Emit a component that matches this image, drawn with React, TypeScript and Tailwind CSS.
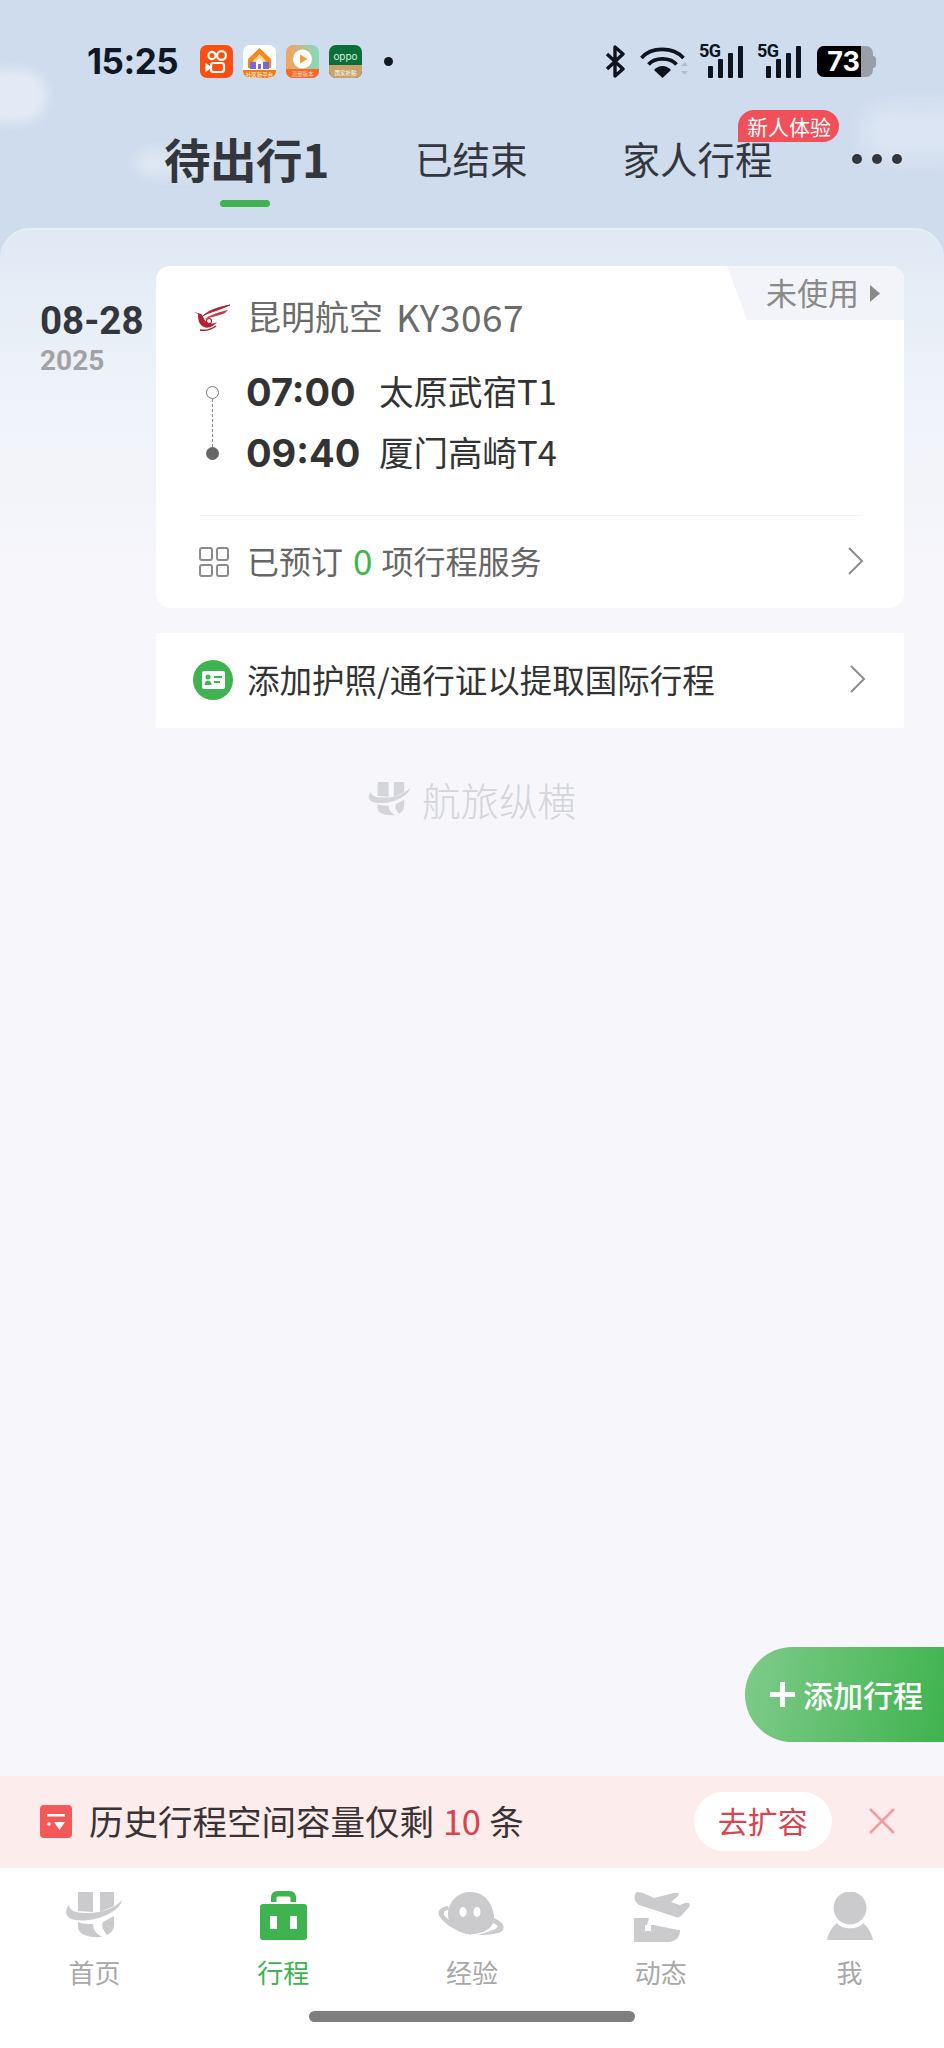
import React from 'react';

const GREEN = '#3fb34f';

const BrandMark: React.FC<{ className?: string }> = ({ className }) => (
    <svg viewBox="0 0 57 46" className={className} fill="currentColor">
        <path d="M13 0h15v20l-15-1z" />
        <path d="M35 0h14v14l-14 6z" />
        <path d="M57 8C55 20 30 31 10 28C2 27-2 20 4 13C4 18 10 21 20 21C35 22 50 16 57 8z" />
        <path d="M13 30C18 32 24 32 28 32C28 38 32 42 37 45C22 46 13 42 13 35z" />
        <path d="M38 30L49 24V33C49 38 46 41 42 43C38 38 36 34 38 30z" />
    </svg>
);

const Chevron: React.FC = () => (
    <svg viewBox="0 0 18 30" className="w-[18px] h-[30px]" fill="none" stroke="#8c8c8c" strokeWidth="2">
        <path d="M2 2l13 13L2 28" />
    </svg>
);

const Kuaishou: React.FC = () => (
    <svg viewBox="0 0 33 33" className="w-[33px] h-[33px]">
        <rect width="33" height="33" rx="7" fill="#fa4f0f" />
        <g fill="none" stroke="#fff" strokeWidth="2.2">
            <circle cx="12" cy="10.5" r="3.6" />
            <circle cx="21.5" cy="10.5" r="4.4" />
            <rect x="11" y="18" width="13" height="9" rx="2.5" />
            <path d="M10 22.5l-3.5-2.5v5z" />
        </g>
    </svg>
);

const HouseApp: React.FC = () => (
    <svg viewBox="0 0 33 33" className="w-[33px] h-[33px]">
        <rect width="33" height="33" rx="7" fill="#fff" />
        <path d="M16.5 3L28 14v9H5V14z" fill="#f28a1e" />
        <path d="M16.5 9l6 6v8h-12v-8z" fill="#fbd38a" />
        <rect x="7" y="17" width="19" height="7" fill="#7a68d8" />
        <path d="M16.5 13l3.5 3.5V24h-7v-7.500z" fill="#fff" />
        <rect x="15" y="19" width="3" height="5" fill="#7a68d8" />
        <path d="M0 25h33v1a7 7 0 0 1-7 7H7a7 7 0 0 1-7-7z" fill="#f07d12" />
        <text x="16.5" y="31.500" textAnchor="middle" fontSize="5.500" fill="#fff" fontFamily="'Noto Sans CJK SC', sans-serif">社区新平台</text>
    </svg>
);

const PlayApp: React.FC = () => (
    <svg viewBox="0 0 33 33" className="w-[33px] h-[33px]">
        <defs>
            <linearGradient id="playBg" x1="0" y1="0" x2="1" y2="0">
                <stop offset="0" stopColor="#f7a25a" />
                <stop offset="1" stopColor="#7fdcc0" />
            </linearGradient>
        </defs>
        <rect width="33" height="33" rx="7" fill="url(#playBg)" />
        <path d="M0 24h33v2a7 7 0 0 1-7 7H7a7 7 0 0 1-7-7z" fill="#f4692a" />
        <circle cx="16.5" cy="14" r="9.500" fill="#fff" />
        <path d="M14 9.500l7.500 4.500-7.500 4.500z" fill="#f59a3c" />
        <text x="16.5" y="31" textAnchor="middle" fontSize="5.500" fill="#ffd9c2" fontFamily="'Noto Sans CJK SC', sans-serif">流量版本</text>
    </svg>
);

const OppoApp: React.FC = () => (
    <svg viewBox="0 0 33 33" className="w-[33px] h-[33px]">
        <rect width="33" height="33" rx="7" fill="#0b6d37" />
        <path d="M0 20h33v6a7 7 0 0 1-7 7H7a7 7 0 0 1-7-7z" fill="#c7a26c" />
        <text x="16.5" y="15" textAnchor="middle" fontSize="10" fill="#d8f0df" fontFamily="'Inter', sans-serif">oppo</text>
        <text x="16.5" y="29.500" textAnchor="middle" fontSize="5.500" fill="#fff" fontFamily="'Noto Sans CJK SC', sans-serif">国家补贴</text>
    </svg>
);

const Signal: React.FC = () => (
    <div className="relative w-[44px] h-[33px]">
        <span className="absolute left-0 top-[-4px] text-[18px] leading-[20px] font-bold tracking-[-0.5px] text-[#0d1420] font-['Roboto',sans-serif]">5G</span>
        <div className="absolute left-[9px] bottom-0 flex items-end gap-[5px]">
            <div className="w-[5px] h-[12px] bg-[#0d1420] rounded-[1px]" />
            <div className="w-[5px] h-[19px] bg-[#0d1420] rounded-[1px]" />
            <div className="w-[5px] h-[25px] bg-[#0d1420] rounded-[1px]" />
            <div className="w-[5px] h-[32px] bg-[#0d1420] rounded-[1px]" />
        </div>
    </div>
);

const StatusBar: React.FC = () => (
    <div className="flex items-center h-[33px] mt-[45px] pl-[87px] pr-[68px]">
        <span className="w-[113px] text-[35px] leading-[33px] font-bold text-[#0f1723] font-['Inter',sans-serif] tracking-[-0.5px]">15:25</span>
        <div className="flex gap-[10px]">
            <Kuaishou />
            <HouseApp />
            <PlayApp />
            <OppoApp />
        </div>
        <div className="w-[9px] h-[9px] ml-[22px] rounded-full bg-[#0f1723]" />
        <div className="flex items-center ml-auto">
            <svg viewBox="0 0 20 33" className="w-[20px] h-[33px]" fill="none" stroke="#0d1420" strokeWidth="3.4" strokeLinejoin="round">
                <path d="M2 9l16 15-8 7V2l8 7L2 24" />
            </svg>
            <svg viewBox="0 0 48 33" className="w-[48px] h-[33px] ml-[15px]" fill="none">
                <g stroke="#0d1420" strokeWidth="3.600">
                    <path d="M1.500 13C11 1.500 33 1.500 43.500 13" />
                    <path d="M8.500 19.500C15 12 30 12 36.500 19.500" />
                </g>
                <path d="M14 25C19 19.500 26 19.500 31 25l-8.500 8z" fill="#0d1420" />
                <path d="M41 21l4-4 3 4zM41 26l3.500 4 3.500-4z" fill="#b4bccb" />
            </svg>
            <div className="ml-[11px]"><Signal /></div>
            <div className="ml-[14px]"><Signal /></div>
            <div className="ml-[16px] flex items-center">
                <div className="relative w-[56px] h-[31px] rounded-[7px] overflow-hidden bg-[#9a9ea9]">
                    <div className="w-[44px] h-full bg-black flex items-center justify-end pr-[1px]">
                        <span className="text-[27px] leading-[31px] font-bold text-white font-['Inter',sans-serif]">73</span>
                    </div>
                </div>
                <div className="w-[3px] h-[12px] rounded-r-full bg-[#9a9ea9]" />
            </div>
        </div>
    </div>
);

const TabBar: React.FC = () => (
    <div className="relative flex items-center h-[60px] mt-[50px] pl-[164px] text-[#33373d]">
        <div className="relative">
            <span className="text-[46.5px] leading-[60px] font-bold tracking-[-0.5px]">待出行1</span>
            <div className="absolute left-[56px] top-[72px] w-[50px] h-[7px] rounded-full" style={{ backgroundColor: GREEN }} />
        </div>
        <span className="ml-[86px] text-[37.5px] leading-[60px]">已结束</span>
        <div className="relative ml-[95px]">
            <span className="text-[37.5px] leading-[60px]">家人行程</span>
            <div className="absolute left-[116px] top-[-18px] w-[101px] h-[32px] rounded-t-[16px] rounded-br-[16px] bg-[#f0505a] text-white text-[21px] leading-[32px] text-center whitespace-nowrap">新人体验</div>
        </div>
        <div className="flex gap-[10px] ml-[80px] mt-[2px]">
            <div className="w-[10px] h-[10px] rounded-full bg-[#33373d]" />
            <div className="w-[10px] h-[10px] rounded-full bg-[#33373d]" />
            <div className="w-[10px] h-[10px] rounded-full bg-[#33373d]" />
        </div>
    </div>
);

const AirlineLogo: React.FC = () => (
    <svg viewBox="2 0 38 27" className="w-[38px] h-[27px] -ml-[1px]" fill="none">
        <path d="M38 1C28 3 16 6 10 13C13 9 25 7 38 1z" fill="#b3202e" stroke="#b3202e" />
        <path d="M36 6C27 8 17 11 12 16C17 13 27 12 33 9z" fill="#c43a46" />
        <path d="M2 8L6 10C6 16 7 21 12 23C16 25 22 22 25 18C21 20 17 20 15 18C11 16 12 12 9 10z" fill="#b3202e" />
        <circle cx="17" cy="17" r="2.500" stroke="#b3202e" strokeWidth="1.200" />
        <path d="M8 26C14 27 20 25 24 22" stroke="#b3202e" strokeWidth="1.500" />
    </svg>
);

const FlightCard: React.FC = () => (
    <div className="relative bg-white rounded-[14px] h-[342px] px-[39px]">
        <div className="absolute right-0 top-0 w-[177px] h-[54px] rounded-tr-[14px] bg-[#f3f4f9] [clip-path:polygon(0_0,100%_0,100%_100%,20px_100%)] flex items-center justify-end pr-[24px]">
            <span className="text-[31px] leading-[52px] pb-[2px] text-[#8a8a8a]">未使用</span>
            <svg viewBox="0 0 10 17" className="w-[10px] h-[17px] ml-[11px]" fill="#8a8a8a">
                <path d="M0 0l10 8.500L0 17z" />
            </svg>
        </div>
        <div className="flex items-center h-[50px] pt-[26px] box-content leading-[50px] text-[#6b6b6b]">
            <AirlineLogo />
            <span className="ml-[15px] pb-[2px] text-[34px] whitespace-nowrap">昆明航空</span>
            <span className="ml-[13px] pb-[2px] text-[37px] tracking-[0.5px]">KY3067</span>
        </div>
        <div className="flex mt-[20px]">
            <div className="relative w-[52px] h-[122px]">
                <div className="absolute left-[11px] top-[24px] w-[13px] h-[13px] rounded-full border border-[#777] bg-white" />
                <div className="absolute left-[17px] top-[37px] h-[48px] border-l border-dashed border-[#888]" />
                <div className="absolute left-[11px] top-[85px] w-[13px] h-[13px] rounded-full bg-[#666]" />
            </div>
            <div className="flex flex-col -ml-[1px] text-[#333]">
                <div className="flex items-center h-[61px]">
                    <span className="w-[133px] text-[38px] leading-[61px] font-bold font-['Inter',sans-serif]">07:00</span>
                    <span className="pb-[4px] text-[34.5px] leading-[57px] whitespace-nowrap">太原武宿T1</span>
                </div>
                <div className="flex items-center h-[61px]">
                    <span className="w-[133px] text-[38px] leading-[61px] font-bold font-['Inter',sans-serif]">09:40</span>
                    <span className="pb-[4px] text-[34.5px] leading-[57px] whitespace-nowrap">厦门高崎T4</span>
                </div>
            </div>
        </div>
        <div className="h-px bg-[#f2f2f2] mt-[31px] mr-[2px] ml-[4px]" />
        <div className="flex items-center h-[92px] ml-[4px] mr-[2px] text-[32px] leading-[84px] text-[#666]">
            <div className="grid grid-cols-2 gap-[3px] w-[30px] h-[30px]">
                <div className="border-2 border-[#8c8c8c] rounded-[3px]" />
                <div className="border-2 border-[#8c8c8c] rounded-[3px]" />
                <div className="border-2 border-[#8c8c8c] rounded-[3px]" />
                <div className="border-2 border-[#8c8c8c] rounded-[3px]" />
            </div>
            <span className="ml-[18px] pb-[5px]">已预订</span>
            <span className="ml-[10px] pb-[5px] text-[35px]" style={{ color: GREEN }}>0</span>
            <span className="ml-[9px] pb-[5px]">项行程服务</span>
            <div className="ml-auto -mr-[2px] -mt-[3px]"><Chevron /></div>
        </div>
    </div>
);

const PassportRow: React.FC = () => (
    <div className="flex items-center h-[95px] mt-[25px] bg-white pl-[37px] pr-[37px]">
        <svg viewBox="0 0 40 40" className="w-[40px] h-[40px] -mt-[2px]">
            <circle cx="20" cy="20" r="20" fill={GREEN} />
            <rect x="9" y="11" width="23" height="18" rx="2" fill="#fff" />
            <circle cx="15" cy="17" r="2.500" fill={GREEN} />
            <path d="M11.500 25c0-6 7-6 7 0z" fill={GREEN} />
            <rect x="21" y="16" width="8" height="2" fill={GREEN} />
            <rect x="21" y="21" width="6" height="2" fill={GREEN} />
        </svg>
        <span className="ml-[14px] pb-[5px] text-[32.5px] leading-[85px] text-[#333] whitespace-nowrap">添加护照/通行证以提取国际行程</span>
        <div className="ml-auto -mr-[0px] -mt-[3px]"><Chevron /></div>
    </div>
);

const NavIcon: React.FC<{ name: string }> = ({ name }) => {
    if (name === '首页') return <BrandMark className="w-[57px] h-[46px] mt-[3px] -ml-[2px] text-[#cbcbcd]" />;
    if (name === '行程')
        return (
            <svg viewBox="0 0 47 51" className="w-[47px] h-[51px]">
                <path d="M11 13V8a6 6 0 0 1 6-6h13a6 6 0 0 1 6 6v5h-5.500V9a1.500 1.500 0 0 0-1.500-1.500H18A1.500 1.500 0 0 0 16.500 9v4z" fill={GREEN} />
                <rect y="15" width="47" height="36" rx="3" fill={GREEN} />
                <rect x="10" y="27" width="7" height="13" fill="#fff" />
                <rect x="30" y="27" width="7" height="13" fill="#fff" />
            </svg>
        );
    if (name === '经验')
        return (
            <svg viewBox="0 0 66 44" className="w-[66px] h-[44px] mt-[3px] -ml-[2px]" fill="#cbcbcd">
                <path d="M32 0C46 0 54 10 56 24C57 34 48 41 36 42C22 43 10 36 10 22C10 10 20 0 32 0z" />
                <path d="M10 14C2 15-2 20 2 25C7 33 20 40 34 43L24 35C16 32 9 27 6 23C5 20 7 18 11 18z" />
                <path d="M56 26C64 30 67 33 65 38C63 42 50 43 40 43C48 40 58 38 60 35C60 33 58 32 55 31z" />
                <ellipse cx="25" cy="20" rx="3.500" ry="5" fill="#fff" />
                <ellipse cx="39" cy="20" rx="3.500" ry="5" fill="#fff" />
            </svg>
        );
    if (name === '动态')
        return (
            <svg viewBox="0 0 57 50" className="w-[57px] h-[50px] mt-[3px] ml-[4px]" fill="#cbcbcd">
                <path d="M3 0C8 0 14 3 20 6L40 1C44 0 46 2 44 4L37 10L46 13L51 11C55 10 57 12 55 15L48 23C46 25 44 26 42 25L5 13C0 10-1 3 3 0z" />
                <path d="M0 26H15L13 33H20L44 38H46C46 45 42 50 34 50H0z" />
                <rect x="11" y="33" width="6" height="6" fill="#fff" />
            </svg>
        );
    return (
        <svg viewBox="0 0 46 48" className="w-[46px] h-[48px] mt-[3px]" fill="#cbcbcd">
            <ellipse cx="23" cy="16" rx="16.500" ry="16.500" />
            <path d="M10 31C14 38 32 38 36 31C41 35 45 42 46 48H0C1 42 5 35 10 31z" />
        </svg>
    );
};

const NAV_ITEMS = ['首页', '行程', '经验', '动态', '我'];

const BottomNav: React.FC = () => (
    <div className="h-[182px] bg-white border-t-2 border-[#f1f1f1]">
        <div className="grid grid-cols-5 pt-[21px]">
            {NAV_ITEMS.map((name) => (
                <div key={name} className="flex flex-col items-center">
                    <div className="flex items-start justify-center h-[54px]">
                        <NavIcon name={name} />
                    </div>
                    <span
                        className="mt-[9px] text-[26px] leading-[40px]"
                        style={{ color: name === '行程' ? GREEN : '#a8a8a8' }}
                    >
                        {name}
                    </span>
                </div>
            ))}
        </div>
        <div className="w-[326px] h-[11px] mx-auto mt-[19px] rounded-full bg-[#7f7f7f]" />
    </div>
);

const App: React.FC = () => {
    return (
        <div className="relative w-[944px] h-[2048px] overflow-hidden flex flex-col bg-[#cfdcee] font-['Noto_Sans_CJK_SC',sans-serif]">
            {/* 구름 */}
            <div className="absolute left-[-25px] top-[70px] w-[72px] h-[52px] rounded-full bg-[#e2ebf5] blur-[6px]" />
            <div className="absolute left-[135px] top-[150px] w-[80px] h-[26px] rounded-full bg-[#dde7f2] blur-[6px]" />
            <div className="absolute left-[860px] top-[105px] w-[120px] h-[55px] rounded-full bg-[#dbe5f3] blur-[10px]" />

            <div className="relative h-[228px]">
                <StatusBar />
                <TabBar />
            </div>

            <div className="relative flex-1 flex flex-col rounded-t-[30px] border-t-2 border-[#e6eef7] bg-[linear-gradient(180deg,#dfe9f4_0px,#eef2f9_150px,#f6f6fb_330px)]">
                <div className="flex pt-[36px] pr-[40px]">
                    <div className="w-[156px] pl-[40px]">
                        <div className="text-[38.5px] leading-[40px] mt-[35px] font-bold text-[#33373d] font-['Roboto',sans-serif] whitespace-nowrap">08-28</div>
                        <div className="text-[28px] leading-[34px] mt-[3px] font-bold text-[#a3a3a3] font-['Roboto',sans-serif]">2025</div>
                    </div>
                    <div className="flex-1">
                        <FlightCard />
                        <PassportRow />
                    </div>
                </div>
                <div className="flex items-center justify-center mt-[48px] text-[#d4d5da]">
                    <BrandMark className="w-[42px] h-[34px]" />
                    <span className="ml-[12px] text-[38.5px] leading-[46px] font-light">航旅纵横</span>
                </div>
            </div>

            <div className="absolute right-0 top-[1647px] flex items-center w-[199px] h-[95px] rounded-l-[48px] bg-[linear-gradient(100deg,#7fcb8a,#3fb34f)] pl-[25px]">
                <svg viewBox="0 0 25 25" className="w-[25px] h-[25px]" fill="#fff">
                    <path d="M10 0h5v10h10v5H15v10h-5V15H0v-5h10z" />
                </svg>
                <span className="ml-[8px] text-[30px] leading-[95px] font-medium text-white whitespace-nowrap">添加行程</span>
            </div>

            <div className="flex items-center h-[90px] bg-[#fdecec] pl-[40px]">
                <svg viewBox="0 0 32 33" className="w-[32px] h-[33px]">
                    <rect width="32" height="33" rx="4" fill="#f4595a" />
                    <rect x="7" y="9" width="18" height="2.500" fill="#fff" />
                    <circle cx="9" cy="19" r="1.800" fill="#fff" />
                    <path d="M14 17h11l-5.500 8z" fill="#fff" />
                </svg>
                <span className="ml-[17px] pb-[2px] text-[34.5px] leading-[86px] text-[#3a3336] whitespace-nowrap">历史行程空间容量仅剩</span>
                <span className="ml-[9px] pb-[2px] text-[34.5px] leading-[86px] tracking-[-0.5px] text-[#d9434f]">10</span>
                <span className="ml-[9px] pb-[2px] text-[34.5px] leading-[86px] text-[#3a3336]">条</span>
                <div className="ml-[170px] flex items-center justify-center w-[138px] h-[59px] rounded-full bg-white text-[30px] leading-[55px] pb-[2px] text-[#d9434f]">去扩容</div>
                <svg viewBox="0 0 26 26" className="w-[26px] h-[26px] ml-[37px]" fill="none" stroke="#f29ca2" strokeWidth="2.500">
                    <path d="M1 1l24 24M25 1L1 25" />
                </svg>
            </div>

            <BottomNav />
        </div>
    );
};

export default App;
